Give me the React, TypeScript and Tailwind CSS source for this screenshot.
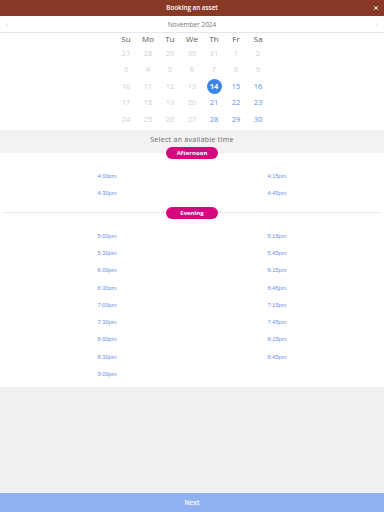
import { ChevronLeft, ChevronRight, X } from "lucide-react";

const weekdays = ["Su", "Mo", "Tu", "We", "Th", "Fr", "Sa"];

// [label, state] — state: 0 = past, 1 = selected, 2 = available
const weeks: [number, number][][] = [
  [[27, 0], [28, 0], [29, 0], [30, 0], [31, 0], [1, 0], [2, 0]],
  [[3, 0], [4, 0], [5, 0], [6, 0], [7, 0], [8, 0], [9, 0]],
  [[10, 0], [11, 0], [12, 0], [13, 0], [14, 1], [15, 2], [16, 2]],
  [[17, 0], [18, 0], [19, 0], [20, 0], [21, 2], [22, 2], [23, 2]],
  [[24, 0], [25, 0], [26, 0], [27, 0], [28, 2], [29, 2], [30, 2]],
];

const afternoon = ["4:00pm", "4:15pm", "4:30pm", "4:45pm"];
const evening = [
  "5:00pm", "5:15pm", "5:30pm", "5:45pm", "6:00pm", "6:15pm",
  "6:30pm", "6:45pm", "7:00pm", "7:15pm", "7:30pm", "7:45pm",
  "8:00pm", "8:15pm", "8:30pm", "8:45pm", "9:00pm",
];

function Pill({ label }: { label: string }) {
  return (
    <div className="w-[52px] h-[12px] rounded-full bg-[#d6067f] flex items-center justify-center text-white text-[6px] font-bold leading-none">
      {label}
    </div>
  );
}

function Times({ slots }: { slots: string[] }) {
  return (
    <div className="w-[340px] mx-auto grid grid-cols-2">
      {slots.map((t) => (
        <div
          key={t}
          className="h-[17.25px] flex items-center justify-center text-[5.7px] text-[#6a8ee6] font-['Liberation_Sans',Arial,sans-serif]"
        >
          {t}
        </div>
      ))}
    </div>
  );
}

export default function App() {
  return (
    <div className="w-full h-[512px] flex flex-col bg-[#f0f0f0] font-['Open_Sans',sans-serif]">
      {/* Title bar */}
      <div className="relative h-4 shrink-0 bg-[#893a27] flex items-center justify-center">
        <span className="text-white text-[6.3px] font-semibold">Booking an asset</span>
        <X className="absolute right-[5px] top-[5px] w-[6px] h-[6px] text-white" strokeWidth={4} />
      </div>

      {/* Month switcher */}
      <div className="h-[17px] shrink-0 bg-white border-b border-[#e4e7ea] flex items-center justify-between px-[4px]">
        <ChevronLeft className="w-[7px] h-[7px] text-[#b0b0b0]" strokeWidth={1.5} />
        <span className="text-[6.5px] text-[#777] pt-px">November 2024</span>
        <ChevronRight className="w-[7px] h-[7px] text-[#b0b0b0]" strokeWidth={1.5} />
      </div>

      {/* Calendar */}
      <div className="bg-white shrink-0 pb-[2.5px]">
        <div className="w-[154px] mx-auto grid grid-cols-7">
          {weekdays.map((d) => (
            <div key={d} className="h-[12px] flex items-center justify-center text-[8px] text-[#555]">
              {d}
            </div>
          ))}
          {weeks.flat().map(([n, s], i) => (
            <div key={i} className="h-[16.5px] flex items-center justify-center">
              {s === 1 ? (
                <div className="w-[15px] h-[15px] rounded-full bg-[#3b86e2] flex items-center justify-center text-white text-[7.5px] font-bold">
                  {n}
                </div>
              ) : (
                <span className={s === 2 ? "text-[7.5px] text-[#5b8fe3]" : "text-[7.5px] text-[#cfcfcf]"}>
                  {n}
                </span>
              )}
            </div>
          ))}
        </div>
      </div>

      {/* Time picker header */}
      <div className="h-[23px] shrink-0 bg-[#f2f2f2] pt-[4px] text-center text-[7px] leading-[12px] tracking-[0.3px] text-[#666]">
        Select an available time
      </div>

      {/* Slots */}
      <div className="bg-white shrink-0 pb-[4px]">
        <div className="flex justify-center -mt-[6px]">
          <Pill label="Afternoon" />
        </div>
        <div className="pt-[8.5px]">
          <Times slots={afternoon} />
        </div>
        <div className="relative h-[13px] mt-[4px] flex items-center justify-center">
          <div className="absolute left-[3px] right-[3px] top-[6px] h-px bg-[#e6e6e6]" />
          <div className="relative">
            <Pill label="Evening" />
          </div>
        </div>
        <div className="pt-[8.5px]">
          <Times slots={evening} />
        </div>
      </div>

      <div className="flex-1" />

      {/* Footer */}
      <button className="h-[19px] shrink-0 w-full bg-[#8fb0f3] text-white text-[6.5px] font-semibold">
        Next
      </button>
    </div>
  );
}
